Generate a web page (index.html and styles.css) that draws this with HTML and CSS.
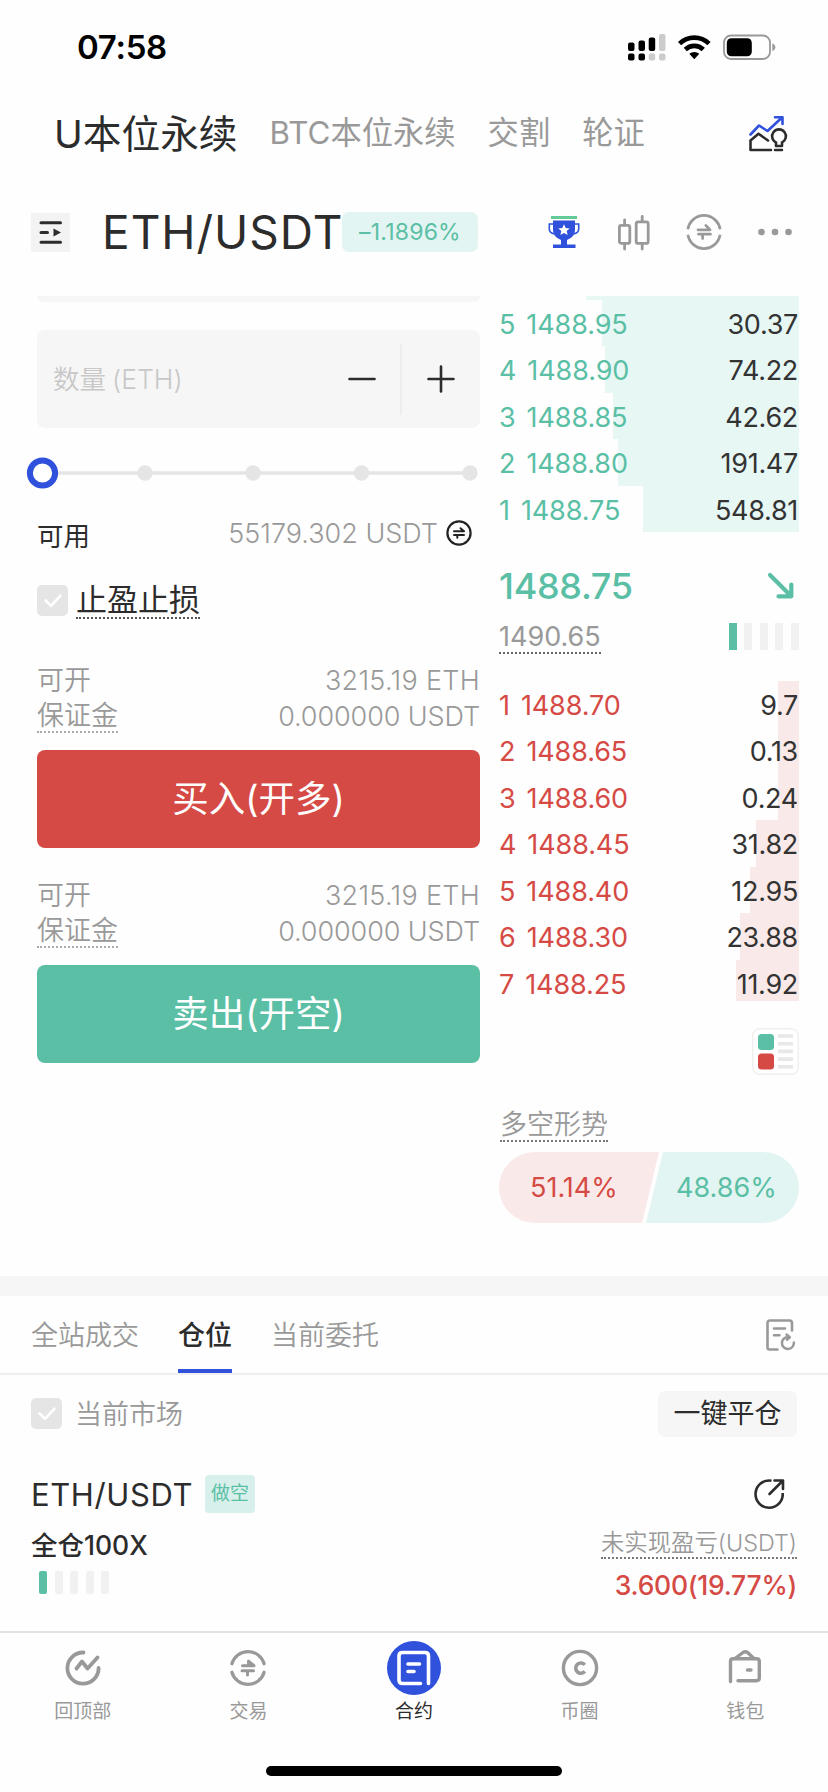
FILE: index.html
```html
<!DOCTYPE html>
<html lang="zh-CN">
<head>
<meta charset="utf-8">
<title>ETH/USDT</title>
<link rel="stylesheet" href="styles.css">
</head>
<body>
<svg width="0" height="0" class="defs">
  <symbol id="swap" viewBox="0 0 36 36">
    <path d="M1.9 15.2A16.3 16.3 0 0 1 34.1 15.2M1.9 20.8A16.3 16.3 0 0 0 34.1 20.8" fill="none" stroke="currentColor" stroke-width="2.7"/>
    <path d="M12 15.8H24L19.8 11.4M24.5 20.2H12.5M16.6 24.6V20.2" fill="none" stroke="currentColor" stroke-width="2.7" stroke-linecap="round" stroke-linejoin="round"/>
  </symbol>
  <symbol id="check" viewBox="0 0 31 31">
    <path d="M8.5 15.5L14 20.8L23.5 10.6" fill="none" stroke="#fff" stroke-width="2.6" stroke-linecap="round" stroke-linejoin="round"/>
  </symbol>
</svg>
<div class="screen">
  <header class="status">
    <span class="time">07:58</span>
    <svg width="149" height="30" viewBox="0 0 149 30">
      <g>
        <rect x="0" y="10.500" width="6.500" height="8.500" rx="2"/><rect x="10.500" y="8.500" width="6.500" height="10.500" rx="2"/><rect x="20.700" y="5.500" width="6.500" height="13.500" rx="2"/>
        <rect x="31" y="2" width="6.500" height="17" rx="2" fill="#ccc"/>
        <rect x="0" y="21.500" width="6.500" height="7" rx="2"/><rect x="10.500" y="21.500" width="6.500" height="7" rx="2"/>
        <rect x="20.700" y="21.500" width="6.500" height="7" rx="2" fill="#ccc"/><rect x="31" y="21.500" width="6.500" height="7" rx="2" fill="#ccc"/>
      </g>
      <g fill="none" stroke="#000" stroke-width="4.600">
        <path d="M51.600 11.600A21 21 0 0 1 81 11.600"/><path d="M57.300 17.500A13 13 0 0 1 75.300 17.500"/>
      </g>
      <path d="M61.300 21.800A7.500 7.500 0 0 1 71.300 21.800L66.300 27.200Z"/>
      <rect x="96" y="3.500" width="46" height="23.500" rx="7" fill="none" stroke="#999" stroke-width="1.800"/>
      <rect x="98.800" y="6.200" width="25" height="18" rx="4.500"/>
      <path d="M144.300 11.500Q147.300 12.500 147.300 15.200T144.300 19Z" fill="#999"/>
    </svg>
  </header>

  <nav class="markets">
    <span class="market market-on">U本位永续</span>
    <span class="market">BTC本位永续</span>
    <span class="market">交割</span>
    <span class="market">轮证</span>
    <svg class="insight" width="40" height="38" viewBox="0 0 40 38" fill="none" stroke-width="2.600" stroke-linejoin="round" stroke-linecap="round">
      <path d="M2.500 19.500L11 10.500L19.500 16L34 2.500M27 2.200H34.500V9" stroke="#2f51dc"/>
      <path d="M23 35H2.500V25.500L10.500 18.800L20 25.500M27 35H34" stroke="#2c2c2c"/>
      <path d="M28 31V27.500A6.900 6.900 0 1 1 34 27.500V31Z" stroke="#2c2c2c"/>
    </svg>
  </nav>

  <section class="pair">
    <span class="menu"><svg width="39" height="39" viewBox="0 0 39 39"><path d="M10 9.700H29.500M10 19.500H16.500M10 29.300H29.500" stroke="#2c2c2c" stroke-width="3" stroke-linecap="round"/><path d="M22.500 15.500V23.500L30 19.500Z" fill="#2c2c2c"/></svg></span>
    <h1 class="symbol">ETH/USDT</h1>
    <span class="change">–1.1896%</span>
    <div class="tools">
      <svg width="32" height="34" viewBox="0 0 32 34">
        <path d="M3 1H29V4H3Z" fill="#63cb9a"/>
        <path d="M5 5.500H27V15Q27 22 19 25V29.500H27.500V33H5V29.500H13V25Q5 22 5 15Z" fill="#2f51dc"/>
        <path d="M5 9H1.300V14Q1.300 18 6.500 19M27 9H30.700V14Q30.700 18 25.500 19" fill="none" stroke="#2f51dc" stroke-width="1.600"/>
        <path d="M16 9.200L17.700 13L21.700 13.400L18.700 16.100L19.600 20.100L16 18L12.400 20.100L13.300 16.100L10.300 13.400L14.300 13Z" fill="#fff"/>
      </svg>
      <svg width="34" height="37" viewBox="0 0 34 37" fill="none" stroke="#999" stroke-width="2.800" stroke-linecap="round">
        <rect x="3.400" y="11.400" width="10.400" height="18" rx="2"/><path d="M8.600 6V11M8.600 30V35"/>
        <rect x="20.200" y="7.900" width="12" height="21.500" rx="2"/><path d="M26.200 2.500V7M26.200 30V35"/>
      </svg>
      <svg class="tool-swap" width="36" height="36"><use href="#swap"/></svg>
      <svg width="34" height="8" viewBox="0 0 34 8" fill="#999"><circle cx="3.500" cy="4" r="3.300"/><circle cx="17" cy="4" r="3.300"/><circle cx="30.500" cy="4" r="3.300"/></svg>
    </div>
  </section>

  <main class="trade">
    <section class="order">
      <div class="input-end"></div>
      <div class="amount">
        <span class="hint">数量<span class="hint-unit">(ETH)</span></span>
        <span class="step"><svg width="28" height="28" viewBox="0 0 28 28"><path d="M1.500 14H26.500" stroke="#2c2c2c" stroke-width="2.600" stroke-linecap="round"/></svg></span>
        <span class="step step-plus"><svg width="28" height="28" viewBox="0 0 28 28"><path d="M1.500 14H26.500M14 1.500V26.500" stroke="#2c2c2c" stroke-width="2.600" stroke-linecap="round"/></svg></span>
      </div>
      <svg class="slider" width="453" height="34" viewBox="0 0 453 34">
        <path d="M16 17H444" stroke="#e5e5e5" stroke-width="3.600"/>
        <g fill="#e5e5e5"><circle cx="119" cy="17" r="7.700"/><circle cx="227" cy="17" r="7.700"/><circle cx="335.500" cy="17" r="7.700"/><circle cx="444" cy="17" r="7.700"/></g>
        <circle cx="16.500" cy="17" r="12.600" fill="#fff" stroke="#2f51dc" stroke-width="6"/>
      </svg>
      <div class="balance">
        <span class="balance-name">可用</span>
        <span class="balance-sum">55179.302 USDT</span>
        <svg width="26" height="26" viewBox="0 0 26 26" fill="none" stroke="#222" stroke-linecap="round" stroke-linejoin="round"><circle cx="13" cy="13" r="11.600" stroke-width="2.200"/><path d="M8 11.200H18L14.500 8.200M18 15H8M11.300 17.800V15" stroke-width="2"/></svg>
      </div>
      <div class="stops">
        <span class="box"><svg width="31" height="31"><use href="#check"/></svg></span>
        <span class="stops-name">止盈止损</span>
      </div>
      <div class="limits">
        <div class="limit"><span>可开</span><span class="num num-eth">3215.19 ETH</span></div>
        <div class="limit limit-b"><span class="dotted">保证金</span><span class="num">0.000000 USDT</span></div>
      </div>
      <button class="act buy">买入(开多)</button>
      <div class="limits limits-b">
        <div class="limit"><span>可开</span><span class="num num-eth">3215.19 ETH</span></div>
        <div class="limit limit-b"><span class="dotted">保证金</span><span class="num">0.000000 USDT</span></div>
      </div>
      <button class="act sell">卖出(开空)</button>
    </section>

    <section class="book">
      <div class="rows bids">
        <div class="cut" style="--w:213px"></div>
        <div class="row" style="--w:197px"><span>5</span><span>1488.95</span><b>30.37</b></div>
        <div class="row" style="--w:194px"><span>4</span><span>1488.90</span><b>74.22</b></div>
        <div class="row" style="--w:186px"><span>3</span><span>1488.85</span><b>42.62</b></div>
        <div class="row" style="--w:181px"><span>2</span><span>1488.80</span><b>191.47</b></div>
        <div class="row" style="--w:156px"><span>1</span><span>1488.75</span><b>548.81</b></div>
      </div>
      <div class="last">
        <span class="last-price">1488.75</span>
        <svg width="28" height="28" viewBox="0 0 28 28" fill="none" stroke="#5abfa5" stroke-width="4.200" stroke-linecap="round" stroke-linejoin="round"><path d="M3 3L24 24M11.500 24.300H24.300V12.500"/></svg>
      </div>
      <div class="mark">
        <span class="mark-price">1490.65</span>
        <span class="bars"><i class="on"></i><i></i><i></i><i></i><i></i></span>
      </div>
      <div class="rows asks">
        <div class="row" style="--w:21px"><span>1</span><span>1488.70</span><b>9.7</b></div>
        <div class="row" style="--w:21px"><span>2</span><span>1488.65</span><b>0.13</b></div>
        <div class="row" style="--w:21px"><span>3</span><span>1488.60</span><b>0.24</b></div>
        <div class="row" style="--w:43px"><span>4</span><span>1488.45</span><b>31.82</b></div>
        <div class="row" style="--w:49px"><span>5</span><span>1488.40</span><b>12.95</b></div>
        <div class="row" style="--w:59px"><span>6</span><span>1488.30</span><b>23.88</b></div>
        <div class="row row-end" style="--w:63px"><span>7</span><span>1488.25</span><b>11.92</b></div>
      </div>
      <svg class="depth" width="47" height="47" viewBox="0 0 47 47">
        <rect x=".7" y=".7" width="45.600" height="45.600" rx="7" fill="#fff" stroke="#f1eeee" stroke-width="1.400"/>
        <rect x="6" y="6" width="16" height="16" rx="3.500" fill="#5abfa5"/><rect x="6" y="25.500" width="16" height="16" rx="3.500" fill="#d54a45"/>
        <path d="M26 8H41M26 15.700H41M26 23.400H41M26 31.100H41M26 38.800H41" stroke="#e8e8e8" stroke-width="3.600"/>
      </svg>
      <div class="trend"><span class="trend-name">多空形势</span></div>
      <div class="pill"><span class="long">51.14%</span><span class="short">48.86%</span></div>
    </section>
  </main>

  <section class="positions">
    <nav class="tabs">
      <span class="tab">全站成交</span>
      <span class="tab tab-on">仓位</span>
      <span class="tab">当前委托</span>
      <svg class="history" width="32" height="34" viewBox="0 0 32 34" fill="none" stroke="#999" stroke-width="2.600" stroke-linecap="round" stroke-linejoin="round">
        <path d="M12.500 31.500H4.500Q2.500 31.500 2.500 29.500V5Q2.500 2.500 5 2.500H24.500Q27 2.500 27 5V12.500M9 10.500H20M9 17.200H14.500"/>
        <path d="M28.900 24.500A6 6 0 1 1 23.500 19M21.500 16.500L24.800 19.200L22 21.700" stroke-width="2.500"/>
      </svg>
    </nav>
    <div class="filter">
      <span class="box"><svg width="31" height="31"><use href="#check"/></svg></span>
      <span class="filter-name">当前市场</span>
      <button class="close-all">一键平仓</button>
    </div>
    <div class="pos-head">
      <span class="pos-pair">ETH/USDT</span>
      <span class="side">做空</span>
      <svg width="34" height="34" viewBox="0 0 34 34" fill="none" stroke="#2c2c2c" stroke-width="2.600" stroke-linejoin="round"><path d="M18.500 3.700A13.600 13.600 0 1 0 29.700 16"/><path d="M16.500 17L29 4.500M21.500 3.500H30V12" stroke-linecap="round"/></svg>
    </div>
    <div class="pos-body">
      <div class="pos-left">
        <span class="lever">全仓100X</span>
        <span class="bars bars-round"><i class="on"></i><i></i><i></i><i></i><i></i></span>
      </div>
      <div class="pos-right">
        <span class="pnl-name">未实现盈亏(USDT)</span>
        <span class="pnl">3.600(19.77%)</span>
      </div>
    </div>
  </section>

  <nav class="dock">
    <span class="dock-item">
      <svg width="54" height="54" viewBox="0 0 54 54" fill="none" stroke="#999" stroke-width="3.800" stroke-linecap="round" stroke-linejoin="round"><path d="M27.500 11.500A15.600 15.600 0 1 0 42.600 27"/><path d="M20.500 27.500L26 20.500L31.500 27.500L41.500 16.500"/></svg>
      回顶部</span>
    <span class="dock-item">
      <svg width="54" height="54" viewBox="0 0 54 54" fill="none" stroke="#999" stroke-width="3.200" stroke-linecap="round" stroke-linejoin="round"><path d="M10.900 22.800A16.700 16.700 0 0 1 43.100 22.800M10.900 31.200A16.700 16.700 0 0 0 43.100 31.200"/><path d="M21.500 24.700H33L27.500 20.200V24M32.500 29.700H21M26.500 34V30" stroke-width="3"/></svg>
      交易</span>
    <span class="dock-item dock-on">
      <svg width="54" height="54" viewBox="0 0 54 54" fill="none" stroke="#fff" stroke-width="3.600" stroke-linecap="round" stroke-linejoin="round"><circle cx="27" cy="27" r="27" fill="#2f51dc" stroke="none"/><path d="M41.500 42.500V15Q41.500 11.500 38 11.500H15.500Q12 11.500 12 15V39Q12 42.500 15.500 42.500H33.500M21 23H32.500M21 30.500H27"/></svg>
      合约</span>
    <span class="dock-item">
      <svg width="54" height="54" viewBox="0 0 54 54" fill="none" stroke="#999" stroke-width="3.400"><circle cx="27" cy="27" r="16.600"/><path d="M31.800 23.900A5.100 5.100 0 1 0 31.800 30.300" stroke-width="3.600"/></svg>
      币圈</span>
    <span class="dock-item">
      <svg width="54" height="54" viewBox="0 0 54 54" fill="none" stroke="#999" stroke-width="3.400" stroke-linecap="round" stroke-linejoin="round"><path d="M12.500 40.500V20.500Q12.500 17.800 15.200 17.800H38.500Q41.300 17.800 41.300 20.500V37Q41.300 39.700 38.500 39.700H20M17 17.500L25 11.500Q27.300 10 29.600 11.500L36 17.500"/><path d="M29.500 29H33"/></svg>
      钱包</span>
  </nav>
  <div class="home"></div>
</div>
</body>
</html>
```

FILE: styles.css
```css
* { box-sizing: border-box; }
body { margin: 0; background: #fff; }
.defs { display: block; position: absolute; }
svg { display: block; flex: none; }

.screen {
  width: 828px;
  height: 1792px;
  overflow: hidden;
  background: #fefefe;
  color: #2c2c2c;
  font-family: Inter, "Noto Sans CJK SC", sans-serif;
  font-size: 27px;
  line-height: 1;
  white-space: nowrap;
  display: flex;
  flex-direction: column;
}
button { border: 0; padding: 0; font: inherit; color: inherit; }

.status { height: 94px; padding: 0 51px 0 77px; display: flex; align-items: center; justify-content: space-between; flex: none; color: #000; }
.time { font-size: 33px; font-weight: 600; letter-spacing: -0.3px; }

.markets { height: 80px; padding: 0 40px 0 54px; display: flex; align-items: center; flex: none; }
.market { font-size: 31.300px; color: #999; margin-right: 32px; }
.market-on { font-size: 38.700px; color: #2c2c2c; }
.insight { margin-left: auto; }

.pair { height: 116px; padding: 0 36px 0 31px; display: flex; align-items: center; flex: none; }
.menu { background: #f3f3f3; }
.symbol { margin: 0 0 0 32px; width: 240px; font-size: 46px; font-weight: 400; letter-spacing: 1px; }
.change { width: 136px; height: 40px; line-height: 40px; border-radius: 7px; background: #e3f5f2; color: #5abfa5; font-size: 23px; letter-spacing: 0.2px; text-align: center; }
.tools { margin-left: auto; display: flex; align-items: center; gap: 36px; color: #999; }

.trade { height: 986px; margin-top: 6px; padding: 0 29px 0 37px; display: grid; grid-template-columns: 443px 300px; column-gap: 19px; flex: none; }
.order { display: flex; flex-direction: column; }
.input-end { height: 6px; border-radius: 0 0 7px 7px; background: #f6f6f6; }
.amount { height: 98px; margin-top: 28px; padding-left: 16px; border-radius: 8px; background: #f6f6f6; display: flex; align-items: center; }
.hint { flex: 1; color: #c8c8c8; font-size: 26.500px; font-weight: 350; }
.hint-unit { margin-left: 6px; }
.step { width: 78px; height: 71px; display: flex; align-items: center; justify-content: center; border-right: 2px solid #ededed; }
.step-plus { border: 0; }
.slider { margin: 28px 0 0 -11px; }
.balance { height: 50px; margin-top: 18px; padding-right: 8px; display: flex; align-items: center; }
.balance-name { margin: 7px auto 0 0; font-size: 26.500px; }
.balance-sum { margin-right: 8px; color: #999; font-size: 27px; font-weight: 350; }
.stops { display: flex; align-items: flex-start; gap: 8px; height: 36px; margin-top: 24px; }
.box { width: 31px; height: 31px; margin-top: 3px; border-radius: 5px; background: #e5e5e5; }
.stops-name { font-size: 31px; line-height: 35px; border-bottom: 2px dotted #555; }
.limits { height: 74px; margin-top: 44px; color: #999; font-weight: 350; }
.limits-b { margin-top: 29px; }
.limit { height: 36px; display: flex; align-items: center; justify-content: space-between; font-size: 27px; }
.dotted { height: 33px; line-height: 31px; border-bottom: 2px dotted #aaa; }
.limit-b .num { margin-top: 1px; letter-spacing: -0.1px; }
.num-eth { letter-spacing: 0.3px; }
.act { height: 98px; margin-top: 14px; border-radius: 8px; color: #fff; font-size: 36.500px; flex: none; }
.buy { background: #d54a45; }
.sell { background: #5abfa5; }

.book { display: flex; flex-direction: column; }
.rows { flex: none; --tint: #e7f7f4; color: #5abfa5; }
.asks { --tint: #f9eae9; color: #d54a45; margin-top: 22px; }
.cut, .row { background: linear-gradient(var(--tint), var(--tint)) right / var(--w) 100% no-repeat; }
.cut { height: 4px; }
.row { height: 46px; display: flex; align-items: center; gap: 11px; padding: 2px 1px 0 0; letter-spacing: -0.1px; }
.bids .row:nth-child(odd), .asks .row:nth-child(even) { height: 47px; }
.asks .row-end { height: 41px; padding-top: 7px; }
.row b { margin-left: auto; font-weight: 400; color: #333; letter-spacing: -0.3px; }
.last { height: 64px; margin-top: 22px; padding-right: 4px; display: flex; align-items: center; justify-content: space-between; }
.last-price { color: #5abfa5; font-size: 36px; font-weight: 500; letter-spacing: -0.3px; }
.mark { height: 41px; display: flex; align-items: flex-start; justify-content: space-between; }
.mark-price { height: 36px; line-height: 38px; color: #999; border-bottom: 2px dotted #666; }
.bars { display: flex; gap: 7.600px; margin-top: 5px; }
.bars i { width: 8px; height: 27px; background: #f1f1f1; }
.bars .on { background: #5abfa5; }
.depth { margin: 27px 0 0 auto; }
.trend { height: 36px; margin: 31px 0 0 1px; display: flex; }
.trend-name { height: 36px; line-height: 38px; color: #999; font-weight: 350; border-bottom: 2px dotted #777; }
.pill { height: 71px; margin-top: 10px; border-radius: 36px; overflow: hidden; display: flex; line-height: 71px; font-size: 27px; }
.long { width: 160px; padding-left: 31px; background: #f9eae9; color: #d54a45; clip-path: polygon(0 0, 100% 0, 143px 100%, 0 100%); }
.short { flex: 1; margin-left: -13px; padding-left: 30px; background: #e3f5f2; color: #5abfa5; clip-path: polygon(17px 0, 100% 0, 100% 100%, 0 100%); }

.positions { height: 355px; border-top: 20px solid #f6f6f6; margin-top: -6px; flex: none; }
.tabs { height: 79px; padding: 0 31px; display: flex; border-bottom: 2px solid #efefef; }
.tab { line-height: 79px; margin-right: 39px; color: #999; font-weight: 350; }
.tab-on { height: 77px; color: #2c2c2c; font-weight: 500; background: linear-gradient(#2f51dc, #2f51dc) bottom / 100% 4px no-repeat; }
.history { margin: 22px 0 0 auto; }
.filter { height: 79px; padding: 0 31px; display: flex; align-items: center; }
.filter .box { margin: -2px 13px 0 0; }
.filter-name { color: #999; font-weight: 350; }
.close-all { width: 139px; height: 46px; margin: -2px 0 0 auto; border-radius: 7px; background: #f6f6f6; font-size: 27px; }
.pos-head { height: 80px; padding: 0 41px 0 31px; display: flex; align-items: center; }
.pos-pair { width: 160px; font-size: 31px; letter-spacing: 0.6px; }
.side { width: 50px; height: 38px; margin-left: 14px; line-height: 38px; border-radius: 4px; background: #d8f0eb; color: #5abfa5; font-size: 19px; text-align: center; }
.pos-head svg { margin-left: auto; }
.pos-body { padding: 0 31px; display: flex; justify-content: space-between; }
.pos-left, .pos-right { display: flex; flex-direction: column; }
.pos-right { align-items: flex-end; }
.lever { height: 26px; font-size: 26.500px; font-weight: 450; margin-top: -2px; }
.bars-round { margin: 13px 0 0 8px; }
.bars-round i { height: 23px; border-radius: 2px; }
.pnl-name { margin-top: -7px; height: 32px; line-height: 32px; color: #999; font-size: 23.400px; font-weight: 350; border-bottom: 2px dotted #777; }
.pnl { margin-top: 13px; color: #d54a45; font-size: 26.500px; font-weight: 500; letter-spacing: -0.25px; }

.dock { height: 125px; border-top: 2px solid #e3e3e3; padding-top: 8px; display: grid; grid-template-columns: repeat(5, 1fr); flex: none; background: #fefefe; }
.dock-item { display: flex; flex-direction: column; align-items: center; gap: 7px; color: #999; font-size: 19px; }
.dock-on { color: #2c2c2c; }
.home { width: 296px; height: 10px; margin: 10px auto 0; border-radius: 5px; background: #000; flex: none; }
```
